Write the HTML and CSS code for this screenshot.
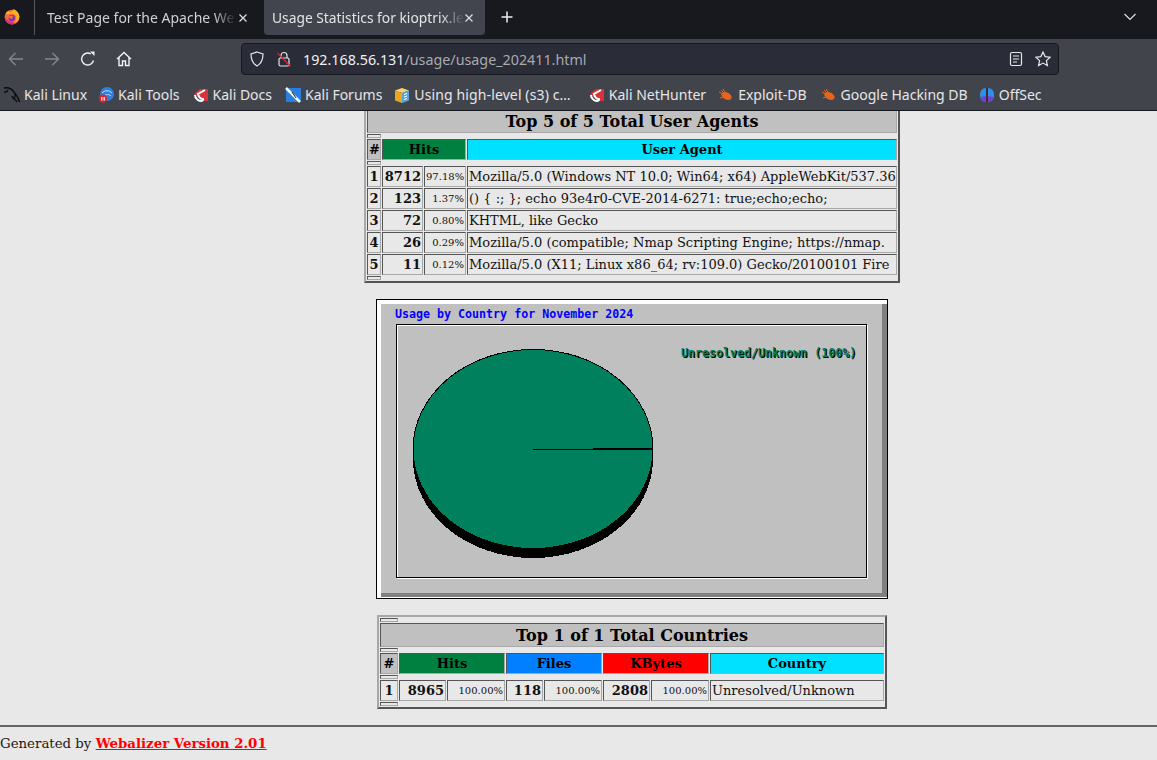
FILE: index.html
```
<!DOCTYPE html>
<html lang="en">
<head>
  <meta charset="UTF-8">
  <title>Usage Statistics for kioptrix</title>
  <link rel="stylesheet" href="styles.css">
</head>
<body>
  <header class="browser">
    <div class="tabbar">
      <div class="pinned">
        <svg class="firefox" viewBox="0 0 16 16" width="16" height="17">
          <circle cx="8" cy="8.6" r="7.4" fill="#f0703a"/>
          <path d="M.7 8.500C.5 12 4 16 8 16c3 0 5-1.500 6-3.500C11 14.500 4 14 .7 8.500Z" fill="#e6287a"/>
          <path d="M2 5C3 3 4 2.500 5 2.400 5 3.600 6 4 7 3.500 8.500 2.500 9.500 1.500 9.500 .5 12 1.500 14.500 3.500 15.400 8 15.500 12 12 15 9 14.500 12 13 13 10 12 7.500 11 5.500 8 5 6 5.500 4.500 6 3.500 5.500 2 5Z" fill="#fbb01c"/>
          <circle cx="7.800" cy="9.500" r="3.200" fill="#7a30c0"/>
          <path d="M4.700 8C6 6.800 8 6.600 9.500 7.500 8.500 8 8 9 9 10 7.500 10.800 5 10 4.700 8Z" fill="#f0703a"/>
        </svg>
      </div>
      <div class="tab">
        <span class="tab-title">Test Page for the Apache We</span>
        <svg class="tab-close" viewBox="0 0 10 10" width="10" height="10"><path d="M1.500 1.500l7 7M8.500 1.500l-7 7"/></svg>
      </div>
      <div class="tab tab-active">
        <span class="tab-title">Usage Statistics for kioptrix.le</span>
        <svg class="tab-close" viewBox="0 0 10 10" width="10" height="10"><path d="M1.500 1.500l7 7M8.500 1.500l-7 7"/></svg>
      </div>
      <svg class="new-tab" viewBox="0 0 12 12" width="12" height="12"><path d="M6 .5v11M.5 6h11"/></svg>
      <svg class="tab-list" viewBox="0 0 12 8" width="12" height="8"><path d="M.5 1l5.500 5.500L11.500 1"/></svg>
    </div>

    <div class="toolbar">
      <div class="nav-buttons">
        <svg class="nav-icon nav-off" viewBox="0 0 16 16" width="16" height="16"><path d="M15 8H1.500M7.500 2L1.500 8l6 6"/></svg>
        <svg class="nav-icon nav-off" viewBox="0 0 16 16" width="16" height="16"><path d="M1 8h13.500M8.500 2l6 6-6 6"/></svg>
        <svg class="nav-icon" viewBox="0 0 16 16" width="16" height="16"><path d="M13.500 9.500A6 6 0 1 1 11 3"/><path d="M10 .5h4.500V5z" class="nav-fill"/></svg>
        <svg class="nav-icon" viewBox="0 0 16 16" width="16" height="16"><path d="M1 8l7-6.500L15 8M3 6.500V14.500h3.500V10h3v4.500H13V6.500"/></svg>
      </div>
      <div class="urlbar">
        <svg class="url-icon" viewBox="0 0 16 16" width="16" height="16"><path d="M8 1l6 2c0 6-1.500 9.500-6 12C3.500 12.500 2 9 2 3z"/></svg>
        <svg class="url-icon" viewBox="0 0 16 16" width="16" height="16"><rect x="3" y="7" width="10" height="8" rx="1.500"/><path d="M5 7V4.500a3 3 0 0 1 6 0V7"/><path class="lock-slash" d="M1.500 2L14.500 15.500"/></svg>
        <div class="url-text"><span class="url-host">192.168.56.131</span>/usage/usage_202411.html</div>
        <svg class="url-icon" viewBox="0 0 16 16" width="16" height="16"><rect x="2.500" y="1.500" width="11" height="13" rx="1.500"/><path d="M5 5h6M5 8h6M5 11h4"/></svg>
        <svg class="url-icon" viewBox="0 0 16 16" width="16" height="16"><path d="M8 1l2.100 4.600 5 .6-3.700 3.400 1 5L8 12.100 3.600 14.600l1-5L.9 6.200l5-.6z"/></svg>
      </div>
    </div>

    <nav class="bookmarks">
      <a class="bookmark b-linux">
        <svg viewBox="0 0 16 16" width="16" height="16"><path d="M0 1c5-1 8 1 10 4 1.500 2 1.500 4 .5 5.500-1 .5-2.500 0-2.500-1.500M4 3C3 5 2 5.500 0 5M10 5c2 3 4.500 5 5.500 10M9 11c1 1 3 1.500 4 4" fill="none" stroke="#0a0a0a" stroke-width="1.300"/></svg>
        <span>Kali Linux</span>
      </a>
      <a class="bookmark b-tools">
        <svg viewBox="0 0 16 16" width="16" height="16"><circle cx="9" cy="7" r="7" fill="#2b7fe0"/><path d="M4 6c3-3 7-3 10 0M6 9c2-2 5-2 7 0" fill="none" stroke="#cfe4fb"/><circle cx="5" cy="11.500" r="4" fill="#e0242a"/><path d="M3.500 10v3.500M5 10v3.500M6.500 10v3.500" stroke="#fff" stroke-width=".8"/></svg>
        <span>Kali Tools</span>
      </a>
      <a class="bookmark b-docs">
        <svg viewBox="0 0 16 16" width="16" height="16"><path d="M1 7l6-5h8v12H9z" fill="#d8333a"/><path d="M2 8c0 3 3 6 6 6 1.500 0 2.500-1 2-2-2 0-4-1-5-5l7-4" fill="none" stroke="#fff" stroke-width="2"/></svg>
        <span>Kali Docs</span>
      </a>
      <a class="bookmark b-forums">
        <svg viewBox="0 0 16 16" width="16" height="16"><rect x="1" y="1" width="15" height="14" fill="#2a7de1"/><path d="M1 1l6 6 3 3 5 5" stroke="#fff" stroke-width="2.500"/><path d="M7 5l4 6" stroke="#222"/></svg>
        <span>Kali Forums</span>
      </a>
      <a class="bookmark b-box">
        <svg viewBox="0 0 16 16" width="16" height="16"><path d="M1 3.500L8 1l7 2.500L8 6z" fill="#f8d46a"/><path d="M1 3.500L8 6v10l-7-2.500z" fill="#eaa620"/><path d="M8 6l7-2.500v10L8 16z" fill="#5aa5e0"/><path d="M10 7.500l3-1M10 10l3-1M10 12.500l3-1" stroke="#fff"/></svg>
        <span>Using high-level (s3) c…</span>
      </a>
      <a class="bookmark b-hunter">
        <svg viewBox="0 0 16 16" width="16" height="16"><path d="M1 7l6-5h8v12H9z" fill="#d8333a"/><path d="M2 8c0 3 3 6 6 6 1.500 0 2.500-1 2-2-2 0-4-1-5-5l7-4" fill="none" stroke="#fff" stroke-width="2"/></svg>
        <span>Kali NetHunter</span>
      </a>
      <a class="bookmark b-exploit">
        <svg viewBox="0 0 16 16" width="16" height="16"><ellipse cx="8.500" cy="9" rx="5.500" ry="3.500" fill="#e8641b" transform="rotate(25 8.500 9)"/><path d="M1 5l4 2M3 3l3 3M5 2l2 3M2 11l3-1" stroke="#e8641b"/></svg>
        <span>Exploit-DB</span>
      </a>
      <a class="bookmark b-ghdb">
        <svg viewBox="0 0 16 16" width="16" height="16"><ellipse cx="8.500" cy="9" rx="5.500" ry="3.500" fill="#e8641b" transform="rotate(25 8.500 9)"/><path d="M1 5l4 2M3 3l3 3M5 2l2 3M2 11l3-1" stroke="#e8641b"/></svg>
        <span>Google Hacking DB</span>
      </a>
      <a class="bookmark b-offsec">
        <svg viewBox="0 0 16 16" width="16" height="16"><path d="M7 1C3 1 1 4 1 8s2 7 6 7z" fill="#2f8fe8"/><path d="M9 1c4 0 6 3 6 7s-2 7-6 7z" fill="#2f8fe8"/><path d="M7 9c0 3 0 5 0 6-3 0-5-2-5.500-5zM9 9c0 3 0 5 0 6 3 0 5-2 5.500-5z" fill="#7b3fd0"/><path d="M8 1v14" stroke="#1d1f28"/></svg>
        <span>OffSec</span>
      </a>
    </nav>
  </header>

  <main class="page">
    <div class="report">
      <table class="stats agents">
        <colgroup>
          <col class="c-num"><col class="c-hits"><col class="c-pct"><col class="c-agent">
        </colgroup>
        <tr class="spacer"><td></td></tr>
        <tr><th colspan="4" class="title">Top 5 of 5 Total User Agents</th></tr>
        <tr class="spacer"><td></td></tr>
        <tr class="head">
          <th class="h-num">#</th>
          <th colspan="2" class="h-hits">Hits</th>
          <th class="h-name">User Agent</th>
        </tr>
        <tr class="spacer"><td></td></tr>
        <tr>
          <td class="num">1</td><td class="val">8712</td><td class="pct">97.18%</td>
          <td class="name">Mozilla/5.0 (Windows NT 10.0; Win64; x64) AppleWebKit/537.36</td>
        </tr>
        <tr>
          <td class="num">2</td><td class="val">123</td><td class="pct">1.37%</td>
          <td class="name">() { :; }; echo 93e4r0-CVE-2014-6271: true;echo;echo;</td>
        </tr>
        <tr>
          <td class="num">3</td><td class="val">72</td><td class="pct">0.80%</td>
          <td class="name">KHTML, like Gecko</td>
        </tr>
        <tr>
          <td class="num">4</td><td class="val">26</td><td class="pct">0.29%</td>
          <td class="name">Mozilla/5.0 (compatible; Nmap Scripting Engine; https://nmap.</td>
        </tr>
        <tr>
          <td class="num">5</td><td class="val">11</td><td class="pct">0.12%</td>
          <td class="name">Mozilla/5.0 (X11; Linux x86_64; rv:109.0) Gecko/20100101 Fire</td>
        </tr>
        <tr class="spacer"><td></td></tr>
      </table>

      <svg class="pie" viewBox="0 0 512 300" width="512" height="300" shape-rendering="crispEdges">
        <rect width="512" height="300" fill="#000"/>
        <rect x="1" y="1" width="510" height="298" fill="#fff"/>
        <rect x="5" y="5" width="506" height="293" fill="#808080"/>
        <rect x="5" y="5" width="501" height="289" fill="#c0c0c0"/>
        <rect x="21.500" y="26.500" width="470" height="253" fill="none" stroke="#fff"/>
        <rect x="20.500" y="25.500" width="470" height="253" fill="none" stroke="#000"/>
        <text class="pie-title" x="19" y="19">Usage by Country for November 2024</text>
        <path d="M37 150 V160 A120 99 0 0 0 277 160 V150Z" fill="#000"/>
        <ellipse cx="157" cy="150" rx="120" ry="99.500" fill="#00805c" stroke="#000"/>
        <path d="M157 150.500H277" stroke="#000"/>
        <path d="M217 149.500H277" stroke="#000"/>
        <text class="pie-legend pie-shadow" x="306" y="59">Unresolved/Unknown (100%)</text>
        <text class="pie-legend" x="305" y="58">Unresolved/Unknown (100%)</text>
      </svg>

      <table class="stats countries">
        <colgroup>
          <col class="d-num"><col class="d-val"><col class="d-pct"><col class="d-files"><col class="d-pct"><col class="d-val"><col class="d-pct"><col class="d-name">
        </colgroup>
        <tr class="spacer"><td></td></tr>
        <tr><th colspan="8" class="title">Top 1 of 1 Total Countries</th></tr>
        <tr class="spacer"><td></td></tr>
        <tr class="head">
          <th class="h-num">#</th>
          <th colspan="2" class="h-hits">Hits</th>
          <th colspan="2" class="h-files">Files</th>
          <th colspan="2" class="h-kbytes">KBytes</th>
          <th class="h-name">Country</th>
        </tr>
        <tr class="spacer"><td></td></tr>
        <tr>
          <td class="num">1</td>
          <td class="val">8965</td><td class="pct">100.00%</td>
          <td class="val">118</td><td class="pct">100.00%</td>
          <td class="val">2808</td><td class="pct">100.00%</td>
          <td class="name">Unresolved/Unknown</td>
        </tr>
        <tr class="spacer"><td></td></tr>
      </table>
    </div>

    <footer class="generated">
      <hr class="rule">
      <p>Generated by <a class="webalizer">Webalizer Version 2.01</a></p>
    </footer>
  </main>
</body>
</html>
```

FILE: styles.css
```
html, body {
  margin: 0;
  height: 100%;
}

body {
  display: flex;
  flex-direction: column;
  overflow: hidden;
  background-color: #e8e8e8;
}

svg {
  display: block;
  flex: none;
}

/* browser chrome */
.browser {
  font-family: "Noto Sans", sans-serif;
  flex: none;
  height: 111px;
  box-sizing: border-box;
  border-bottom: 1px solid #17181d;
  background-color: #42444c;
}

.tabbar {
  display: flex;
  align-items: flex-start;
  height: 39px;
  background-color: #18191e;
}

.pinned {
  width: 35px;
  height: 35px;
  box-sizing: border-box;
  padding: 8px 0 0 4px;
  border-right: 1px solid #55565c;
}

.tab {
  display: flex;
  align-items: center;
  width: 221px;
  height: 35px;
  box-sizing: border-box;
  padding: 0 8px 0 12px;
  margin-right: 8px;
  border-radius: 0 0 4px 4px;
  color: #d0d0d3;
  font-size: 14px;
}

.tab-active {
  margin-right: 0;
  padding: 0 8px;
  background-color: #42454e;
  color: #e4e4e6;
  font-size: 13.8px;
}

.tab-title {
  flex: 1;
  overflow: hidden;
  white-space: nowrap;
  -webkit-mask-image: linear-gradient(to right, #000 88%, transparent 100%);
  mask-image: linear-gradient(to right, #000 88%, transparent 100%);
}

.tab-close {
  margin-left: 2px;
  fill: none;
  stroke: #e0e0e3;
  stroke-width: 1.2;
}

.tab-active .tab-close {
  margin: 0 3px 0 0;
}

.new-tab {
  margin: 11px 0 0 16px;
  fill: none;
  stroke: #f0f0f2;
  stroke-width: 1.5;
}

.tab-list {
  margin: 13px 21px 0 auto;
  fill: none;
  stroke: #e0e0e3;
  stroke-width: 1.2;
}

.toolbar {
  display: flex;
  align-items: center;
  height: 32px;
  padding-top: 4px;
}

.nav-buttons {
  display: flex;
  gap: 20px;
  width: 241px;
  box-sizing: border-box;
  padding-left: 8px;
}

.nav-icon {
  fill: none;
  stroke: #f2f2f4;
  stroke-width: 1.4;
}

.nav-off {
  stroke: #85868c;
}

.nav-fill {
  fill: #f2f2f4;
  stroke: none;
}

.urlbar {
  display: flex;
  align-items: center;
  gap: 11px;
  width: 818px;
  height: 32px;
  box-sizing: border-box;
  padding: 0 7px;
  background-color: #2a2c38;
  border: 1px solid #17181d;
  border-radius: 4px;
  font-size: 14.3px;
}

.url-icon {
  fill: none;
  stroke: #e8e8ea;
  stroke-width: 1.2;
}

.lock-slash {
  stroke: #e0243a;
}

.url-text {
  flex: 1;
  color: #a9aab0;
  white-space: nowrap;
}

.url-host {
  color: #f0f0f2;
}

.bookmarks {
  display: flex;
  align-items: center;
  height: 31px;
  padding: 4px 0 0 4px;
  color: #e6e6e8;
  font-size: 14px;
}

.bookmark {
  display: flex;
  align-items: center;
  gap: 4px;
  margin-right: 12px;
  white-space: nowrap;
}

.b-linux { margin-right: 11px; }
.b-tools { margin-right: 13px; }
.b-docs { margin-right: 13px; }
.b-box { margin-right: 18px; letter-spacing: 0.12px; }
.b-exploit { margin-right: 14px; }
.b-ghdb { margin-right: 11px; }

/* report tables */
.page {
  flex: 1;
  display: flex;
  flex-direction: column;
  overflow: hidden;
  font-family: "DejaVu Serif", serif;
  color: #1a1a1a;
}

.report {
  display: flex;
  flex-direction: column;
  align-items: center;
  padding-left: 107px;
  margin-top: -10px;
}

.stats {
  table-layout: fixed;
  border-collapse: separate;
  border-spacing: 1px;
  border-style: solid;
  border-width: 2px;
  border-color: #a8a8a8 #555 #555 #a8a8a8;
  font-size: 13px;
}

.agents {
  width: 536px;
}

.countries {
  width: 510px;
}

.c-num { width: 14px; }
.c-hits { width: 41px; }
.c-pct { width: 42px; }
.c-agent { width: 430px; }

.d-num { width: 18px; }
.d-val { width: 47px; }
.d-files { width: 37px; }
.d-pct { width: 58px; }
.d-name { width: 174px; }

.stats td,
.stats th {
  box-sizing: border-box;
  padding: 1px;
  border-style: solid;
  border-width: 1px;
  border-color: #555 #a8a8a8 #a8a8a8 #555;
  white-space: nowrap;
  overflow: hidden;
  line-height: 17px;
  color: #111;
}

.stats .spacer td {
  padding: 0;
  height: 4px;
  line-height: 0;
  font-size: 0;
}

.stats .title {
  height: 24px;
  padding: 2px 1px 0;
  background-color: #c0c0c0;
  font-size: 16px;
  line-height: 20px;
  color: #000;
}

.head th {
  height: 21px;
  color: #000;
}

.stats .h-num { background-color: #c0c0c0; }
.h-hits { background-color: #008040; }
.h-files { background-color: #0080ff; }
.h-kbytes { background-color: #ff0000; }
.h-name { background-color: #00e0ff; }

.stats .num {
  text-align: center;
  font-weight: bold;
}

.stats .val {
  text-align: right;
  font-weight: bold;
}

.stats .pct {
  text-align: right;
  font-size: 10px;
}

.pie {
  margin: 16px 0;
}

/* footer */
.rule {
  margin: 16px 0 0;
  border: 0;
  height: 2px;
  background-color: #666;
}

.generated p {
  margin: 8px 0 0;
  font-size: 13.33px;
}

.webalizer {
  color: #ff0000;
  font-weight: bold;
  text-decoration: underline;
}

.pie-title,
.pie-legend {
  font-family: "DejaVu Sans Mono", monospace;
  font-size: 11.65px;
  font-weight: bold;
}

.pie-title {
  fill: #0000ff;
}

.pie-legend {
  fill: #00805c;
}

.pie-shadow {
  fill: #000;
}
```
